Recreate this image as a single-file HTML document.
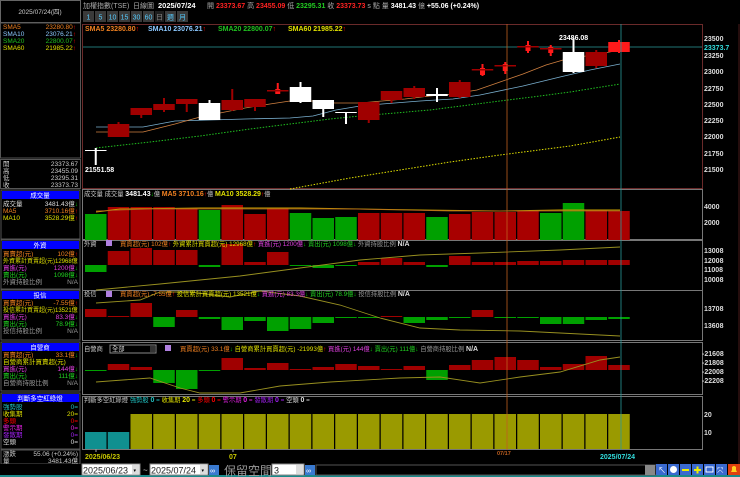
<!DOCTYPE html>
<html><head><meta charset="utf-8">
<style>
html,body{margin:0;padding:0;background:#000;width:740px;height:477px;overflow:hidden}
svg{display:block;font-size:7px}
text{font-family:"Liberation Sans","Noto Sans CJK TC",sans-serif}
.b{font-weight:bold}
</style></head><body>
<svg id="s" width="740" height="477" viewBox="0 0 740 477" xmlns="http://www.w3.org/2000/svg">
<rect width="740" height="477" fill="#000"/>
<rect x="0.5" y="0.5" width="80" height="22" fill="#000" stroke="#666"/>
<text x="40" y="14" fill="#ccc" text-anchor="middle" font-size="6.5">2025/07/24(四)</text>
<rect x="0.5" y="23" width="80" height="135" fill="#000" stroke="#555"/>
<g font-size="6.5">
<text x="3" y="29" fill="#f08020">SMA5</text><text x="76" y="29" fill="#f08020" text-anchor="end">23280.80<tspan fill="#f00">↑</tspan></text>
<text x="3" y="36" fill="#8cc8ff">SMA10</text><text x="76" y="36" fill="#8cc8ff" text-anchor="end">23076.21<tspan fill="#f00">↑</tspan></text>
<text x="3" y="43" fill="#20c020">SMA20</text><text x="76" y="43" fill="#20c020" text-anchor="end">22800.07<tspan fill="#f00">↑</tspan></text>
<text x="3" y="50" fill="#e0e000">SMA60</text><text x="76" y="50" fill="#e0e000" text-anchor="end">21985.22<tspan fill="#f00">↑</tspan></text>
</g>
<rect x="0.5" y="159.5" width="80" height="29" fill="#000" stroke="#555"/>
<g font-size="6.5" fill="#ccc">
<text x="3" y="166">開</text><text x="78" y="166" text-anchor="end">23373.67</text>
<text x="3" y="173">高</text><text x="78" y="173" text-anchor="end">23455.09</text>
<text x="3" y="180">低</text><text x="78" y="180" text-anchor="end">23295.31</text>
<text x="3" y="187">收</text><text x="78" y="187" text-anchor="end">23373.73</text>
</g>
<g font-size="6.5">
<rect x="1" y="190" width="79" height="49" fill="#000" stroke="#555"/>
<rect x="2" y="191" width="77" height="8" fill="#0000ff"/><text x="40" y="197.5" fill="#fff" text-anchor="middle">成交量</text>
<text x="3" y="206" fill="#ddd">成交量</text><text x="78" y="206" fill="#ddd" text-anchor="end">3481.43億<tspan fill="#0c0">↓</tspan></text>
<text x="3" y="213" fill="#f08020">MA5</text><text x="78" y="213" fill="#f08020" text-anchor="end">3710.16億<tspan fill="#f00">↑</tspan></text>
<text x="3" y="220" fill="#e0e000">MA10</text><text x="78" y="220" fill="#e0e000" text-anchor="end">3528.29億<tspan fill="#f00">↑</tspan></text>

<rect x="1" y="240" width="79" height="49" fill="#000" stroke="#555"/>
<rect x="2" y="241" width="77" height="8" fill="#0000ff"/><text x="40" y="247.5" fill="#fff" text-anchor="middle">外資</text>
<text x="3" y="256" fill="#f08020">買賣超(元)</text><text x="78" y="256" fill="#f08020" text-anchor="end">102億<tspan fill="#f00">↑</tspan></text>
<text x="3" y="263" fill="#e0e000" font-size="6">外資累計買賣超(元)12968億</text>
<text x="3" y="270" fill="#e040e0">買進(元)</text><text x="78" y="270" fill="#e040e0" text-anchor="end">1200億<tspan fill="#0c0">↓</tspan></text>
<text x="3" y="277" fill="#20d020">賣出(元)</text><text x="78" y="277" fill="#20d020" text-anchor="end">1098億<tspan fill="#0c0">↓</tspan></text>
<text x="3" y="284" fill="#999">外資持股比例</text><text x="78" y="284" fill="#999" text-anchor="end">N/A</text>

<rect x="1" y="290" width="79" height="50" fill="#000" stroke="#555"/>
<rect x="2" y="291" width="77" height="8" fill="#0000ff"/><text x="40" y="297.5" fill="#fff" text-anchor="middle">投信</text>
<text x="3" y="305" fill="#f08020">買賣超(元)</text><text x="78" y="305" fill="#f08020" text-anchor="end">-7.55億<tspan fill="#f00">↑</tspan></text>
<text x="3" y="312" fill="#e0e000" font-size="6">投信累計買賣超(元)13521億</text>
<text x="3" y="319" fill="#e040e0">買進(元)</text><text x="78" y="319" fill="#e040e0" text-anchor="end">83.3億<tspan fill="#0c0">↓</tspan></text>
<text x="3" y="326" fill="#20d020">賣出(元)</text><text x="78" y="326" fill="#20d020" text-anchor="end">78.9億<tspan fill="#0c0">↓</tspan></text>
<text x="3" y="333" fill="#999">投信持股比例</text><text x="78" y="333" fill="#999" text-anchor="end">N/A</text>

<rect x="1" y="342" width="79" height="49" fill="#000" stroke="#555"/>
<rect x="2" y="343" width="77" height="8" fill="#0000ff"/><text x="40" y="349.5" fill="#fff" text-anchor="middle">自營商</text>
<text x="3" y="357" fill="#f08020">買賣超(元)</text><text x="78" y="357" fill="#f08020" text-anchor="end">33.1億<tspan fill="#0c0">↓</tspan></text>
<text x="3" y="364" fill="#e0e000">自營商累計買賣超(元)</text>
<text x="3" y="371" fill="#e040e0">買進(元)</text><text x="78" y="371" fill="#e040e0" text-anchor="end">144億<tspan fill="#0c0">↓</tspan></text>
<text x="3" y="378" fill="#20d020">賣出(元)</text><text x="78" y="378" fill="#20d020" text-anchor="end">111億<tspan fill="#0c0">↓</tspan></text>
<text x="3" y="385" fill="#999">自營商持股比例</text><text x="78" y="385" fill="#999" text-anchor="end">N/A</text>

<rect x="1" y="393" width="79" height="56" fill="#000" stroke="#555"/>
<rect x="2" y="394" width="77" height="8" fill="#0000ff"/><text x="40" y="400.5" fill="#fff" text-anchor="middle">判斷多空紅綠燈</text>
<text x="3" y="409" fill="#20c0c0">強勢股</text><text x="78" y="409" fill="#20c0c0" text-anchor="end">0=</text>
<text x="3" y="416" fill="#e0e000">收集期</text><text x="78" y="416" fill="#e0e000" text-anchor="end">20=</text>
<text x="3" y="423" fill="#f00">多頭</text><text x="78" y="423" fill="#f00" text-anchor="end">0=</text>
<text x="3" y="430" fill="#e020e0">警示期</text><text x="78" y="430" fill="#e020e0" text-anchor="end">0=</text>
<text x="3" y="437" fill="#a020f0">發散期</text><text x="78" y="437" fill="#a020f0" text-anchor="end">0=</text>
<text x="3" y="444" fill="#ddd">空頭</text><text x="78" y="444" fill="#ddd" text-anchor="end">0=</text>

<rect x="1" y="450" width="79" height="14" fill="#000" stroke="#555"/>
<text x="3" y="456" fill="#ccc">漲跌</text><text x="78" y="456" fill="#ccc" text-anchor="end">55.06 (+0.24%)</text>
<text x="3" y="463" fill="#ccc">量</text><text x="78" y="463" fill="#ccc" text-anchor="end">3481.43億</text>
</g>

<g font-size="7">
<text x="83" y="8" fill="#aaa">加權指數(TSE)</text>
<text x="133" y="8" fill="#aaa">日線圖</text>
<text x="158" y="8" fill="#fff" class="b" font-size="7.5">2025/07/24</text>
<text x="207" y="8" fill="#aaa">開 <tspan fill="#f22" class="b">23373.67</tspan>  高 <tspan fill="#f22" class="b">23455.09</tspan>  低 <tspan fill="#2c2" class="b">23295.31</tspan>  收 <tspan fill="#f22" class="b">23373.73</tspan> s 點  量 <tspan fill="#fff" class="b">3481.43</tspan> 億  <tspan fill="#fff" class="b">+55.06 (+0.24%)</tspan></text>
</g>
<g font-size="7" text-anchor="middle">
<rect x="83" y="11" width="11" height="11" fill="#3a3a3a"/><text x="88.5" y="19.5" fill="#5cf">1</text>
<rect x="95" y="11" width="11" height="11" fill="#3a3a3a"/><text x="100.5" y="19.5" fill="#5cf">5</text>
<rect x="107" y="11" width="11" height="11" fill="#3a3a3a"/><text x="112.5" y="19.5" fill="#5cf">10</text>
<rect x="119" y="11" width="11" height="11" fill="#3a3a3a"/><text x="124.5" y="19.5" fill="#5cf">15</text>
<rect x="131" y="11" width="11" height="11" fill="#3a3a3a"/><text x="136.5" y="19.5" fill="#5cf">30</text>
<rect x="143" y="11" width="11" height="11" fill="#3a3a3a"/><text x="148.5" y="19.5" fill="#5cf">60</text>
<rect x="155" y="11" width="9" height="11" fill="#1e1e1e"/><text x="159.5" y="19.5" fill="#888">日</text>
<rect x="165" y="11" width="11" height="11" fill="#3a3a3a"/><text x="170.5" y="19.5" fill="#5cf">週</text>
<rect x="177" y="11" width="11" height="11" fill="#3a3a3a"/><text x="182.5" y="19.5" fill="#5cf">月</text>
</g>

<g fill="none" stroke="#777" stroke-width="1">
<rect x="82.5" y="24.5" width="620" height="164" stroke="#6a2a2a"/>
<rect x="82.5" y="189.5" width="620" height="50"/>
<rect x="82.5" y="240.5" width="620" height="50"/>
<rect x="82.5" y="290.5" width="620" height="50"/>
<rect x="82.5" y="342.5" width="620" height="52"/>
<rect x="82.5" y="396.5" width="620" height="53"/>
</g>
<line x1="739" y1="24" x2="739" y2="464" stroke="#4a1a1a"/>
<line x1="83" y1="47" x2="702" y2="47" stroke="#2a9a9a" stroke-width="0.8"/>
<g font-size="7" class="b">
<text x="85" y="31" fill="#f08020">SMA5 23280.80<tspan fill="#f00">↑</tspan></text>
<text x="148" y="31" fill="#8cc8ff">SMA10 23076.21<tspan fill="#f00">↑</tspan></text>
<text x="218" y="31" fill="#20c020">SMA20 22800.07<tspan fill="#f00">↑</tspan></text>
<text x="288" y="31" fill="#e0e000">SMA60 21985.22<tspan fill="#f00">↑</tspan></text>
</g>
<polyline fill="none" stroke="#e0e000" stroke-width="1" stroke-dasharray="1.5,1.5" points="290,189 350,178 400,170 450,162 500,155 570,146 620,137"/>
<polyline fill="none" stroke="#20c020" stroke-width="1" stroke-dasharray="1.5,1.5" points="96,148 150,142 200,136 250,129 290,124 330,119 360,116 430,110 500,101 540,96 570,92 620,84"/>
<polyline fill="none" stroke="#7ab0d0" stroke-width="0.8" points="96,127 143,127 175,121 245,119 290,118 313,116 336,110 360,106 382,104 420,101 453,99 480,95 523,86 560,77 590,70 620,64"/>
<polyline fill="none" stroke="#d08040" stroke-width="0.8" points="96,132 143,132 175,124 200,117 245,108 270,104 290,101 313,101 335,103 360,103 382,101 405,99 430,96 453,94 477,90 500,82 523,74 546,65 570,58 594,55 620,50"/>
<g id="cand"></g>
<text x="85" y="172" fill="#fff" class="b" font-size="7">21551.58</text>
<text x="559" y="40" fill="#fff" class="b" font-size="7">23486.08</text>

<g font-size="7" fill="#ddd" class="b">
<text x="704" y="41">23500</text>
<text x="704" y="50" fill="#3dd">23373.7</text>
<text x="704" y="58">23250</text>
<text x="704" y="74">23000</text>
<text x="704" y="91">22750</text>
<text x="704" y="107">22500</text>
<text x="704" y="123">22250</text>
<text x="704" y="139">22000</text>
<text x="704" y="156">21750</text>
<text x="704" y="172">21500</text>
<text x="704" y="209">4000</text>
<text x="704" y="225">2000</text>
<text x="704" y="253">13008</text>
<text x="704" y="263">12008</text>
<text x="704" y="272">11008</text>
<text x="704" y="282">10008</text>
<text x="704" y="311">13708</text>
<text x="704" y="328">13608</text>
<text x="702" y="356">-21608</text>
<text x="702" y="365">-21808</text>
<text x="702" y="374">-22008</text>
<text x="702" y="383">-22208</text>
<text x="704" y="417">20</text>
<text x="704" y="435">10</text>
</g>

<g id="bars"></g>

<g font-size="6.3">
<text x="84" y="196" fill="#ccc">成交量  成交量 <tspan fill="#fff" class="b" font-size="7">3481.43</tspan><tspan fill="#0c0">↓</tspan>億    <tspan fill="#f08020" class="b" font-size="7">MA5 3710.16</tspan><tspan fill="#f00">↑</tspan>億    <tspan fill="#e0e000" class="b" font-size="7">MA10 3528.29</tspan><tspan fill="#f00">↑</tspan>億</text>
<text x="84" y="246" fill="#ccc">外資</text><rect x="106" y="240" width="6" height="6" fill="#b080e0"/>
<text x="120" y="246" fill="#f08020">買賣超(元) 102億<tspan fill="#f00">↑</tspan>   <tspan fill="#e0e000">外資累計買賣超(元) 12968億</tspan><tspan fill="#f00">↑</tspan>   <tspan fill="#e040e0">買進(元) 1200億</tspan><tspan fill="#0c0">↓</tspan>   <tspan fill="#20d020">賣出(元) 1098億</tspan><tspan fill="#0c0">↓</tspan>   <tspan fill="#999">外資持股比例 <tspan fill="#ddd" class="b" font-size="7">N/A</tspan></tspan></text>
<text x="84" y="296" fill="#ccc">投信</text><rect x="106" y="291" width="6" height="6" fill="#b080e0"/>
<text x="120" y="296" fill="#f08020">買賣超(元) -7.55億<tspan fill="#f00">↑</tspan>   <tspan fill="#e0e000">投信累計買賣超(元) 13521億</tspan><tspan fill="#0c0">↓</tspan>   <tspan fill="#e040e0">買進(元) 83.3億</tspan><tspan fill="#0c0">↓</tspan>   <tspan fill="#20d020">賣出(元) 78.9億</tspan><tspan fill="#0c0">↓</tspan>   <tspan fill="#999">投信持股比例 <tspan fill="#ddd" class="b" font-size="7">N/A</tspan></tspan></text>
<text x="84" y="351" fill="#ccc">自營商</text>
<rect x="110" y="345" width="46" height="8" fill="#000" stroke="#888"/><text x="112" y="351" fill="#ddd">全部</text><rect x="150" y="346" width="5" height="6" fill="#333"/>
<rect x="165" y="345" width="6" height="6" fill="#b080e0"/>
<text x="180" y="351" fill="#f08020">買賣超(元) 33.1億<tspan fill="#0c0">↓</tspan>   <tspan fill="#e0e000">自營商累計買賣超(元) -21993億</tspan><tspan fill="#f00">↑</tspan>   <tspan fill="#e040e0">買進(元) 144億</tspan><tspan fill="#0c0">↓</tspan>   <tspan fill="#20d020">賣出(元) 111億</tspan><tspan fill="#0c0">↓</tspan>   <tspan fill="#999">自營商持股比例 <tspan fill="#ddd" class="b" font-size="7">N/A</tspan></tspan></text>
<text x="84" y="402" fill="#ccc">判斷多空紅綠燈    <tspan fill="#20c0c0">強勢股 <tspan class="b" font-size="7">0</tspan> =</tspan>   <tspan fill="#e0e000">收集期 <tspan class="b" font-size="7">20</tspan> =</tspan>   <tspan fill="#f00">多頭 <tspan class="b" font-size="7">0</tspan> =</tspan>   <tspan fill="#e020e0">警示期 <tspan class="b" font-size="7">0</tspan> =</tspan>   <tspan fill="#a020f0">發散期 <tspan class="b" font-size="7">0</tspan> =</tspan>   <tspan fill="#ddd">空頭 <tspan class="b" font-size="7">0</tspan> =</tspan></text>
</g>

<line x1="507" y1="24" x2="507" y2="450" stroke="#c06020" stroke-width="0.8"/>
<line x1="621" y1="24" x2="621" y2="450" stroke="#2a9a9a" stroke-width="0.8"/>

<g font-size="7" class="b">
<line x1="96" y1="449" x2="96" y2="452" stroke="#aaa"/>
<text x="85" y="459" fill="#c8c800">2025/06/23</text>
<line x1="233" y1="449" x2="233" y2="452" stroke="#aaa"/>
<text x="229" y="459" fill="#c8c800">07</text>
<text x="497" y="455" fill="#c06020" font-size="5.5">07/17</text>
<text x="600" y="459" fill="#3dd">2025/07/24</text>
</g>

<rect x="0" y="464" width="740" height="13" fill="#000"/>
<rect x="0" y="475" width="740" height="2" fill="#1a8a8a"/>
<rect x="82" y="464" width="58" height="11" fill="#fff" stroke="#888"/>
<text x="83" y="473.5" fill="#222" font-size="9">2025/06/23</text>
<rect x="132" y="465" width="7" height="9" fill="#ddd"/><text x="133.5" y="472" font-size="5" fill="#000">▾</text>
<text x="143" y="473" fill="#ccc" font-size="8">~</text>
<rect x="150" y="464" width="58" height="11" fill="#fff" stroke="#888"/>
<text x="151" y="473.5" fill="#222" font-size="9">2025/07/24</text>
<rect x="200" y="465" width="7" height="9" fill="#ddd"/><text x="201.5" y="472" font-size="5" fill="#000">▾</text>
<rect x="209" y="465" width="10" height="10" fill="#3a7ad0"/><text x="210" y="473" font-size="7" fill="#fff">∞</text>
<text x="224" y="475" fill="#999" font-size="12">保留空間</text>
<rect x="272" y="464" width="32" height="11" fill="#fff" stroke="#888"/>
<text x="274" y="473.5" fill="#222" font-size="9">3</text>
<rect x="296" y="465" width="7" height="9" fill="#ddd"/>
<rect x="305" y="465" width="10" height="10" fill="#3a7ad0"/><text x="306" y="473" font-size="7" fill="#fff">∞</text>
<rect x="316" y="465" width="340" height="10" fill="#000" stroke="#555"/>
<rect x="645" y="465" width="10" height="10" fill="#888"/>
<g>
<rect x="656" y="464" width="11" height="11" fill="#3a6ad0"/><text x="658" y="473" font-size="8" fill="#fff">↖</text>
<rect x="668" y="464" width="11" height="11" fill="#3a6ad0"/><circle cx="673.5" cy="469.5" r="3.5" fill="#fff"/>
<rect x="680" y="464" width="11" height="11" fill="#3a6ad0"/><rect x="682" y="469" width="7" height="2" fill="#ee0"/>
<rect x="692" y="464" width="11" height="11" fill="#3a6ad0"/><rect x="694" y="469" width="7" height="2" fill="#ee0"/><rect x="696.5" y="466.5" width="2" height="7" fill="#ee0"/>
<rect x="704" y="464" width="11" height="11" fill="#3a6ad0"/><rect x="706" y="467" width="7" height="5" fill="none" stroke="#fff"/>
<rect x="716" y="464" width="11" height="11" fill="#3a6ad0"/><text x="717" y="473" font-size="8" fill="#fff">⤧</text>
<rect x="728" y="464" width="12" height="11" fill="#e04010"/><path d="M731 472 L737 472 L736 470 L736 467 Q734 465 732 467 L732 470 Z" fill="#ffd020"/>
</g>
</svg>
<script>
(function(){
var NS="http://www.w3.org/2000/svg";
function R(g,x,y,w,h,f){var r=document.createElementNS(NS,"rect");r.setAttribute("x",x);r.setAttribute("y",y);r.setAttribute("width",w);r.setAttribute("height",Math.max(h,1));r.setAttribute("fill",f);g.appendChild(r);}
function L(g,pts,c,w){var p=document.createElementNS(NS,"polyline");p.setAttribute("points",pts);p.setAttribute("fill","none");p.setAttribute("stroke",c);p.setAttribute("stroke-width",w||0.9);g.appendChild(p);}
var P=22.75,X0=85,W=21.5;
function cx(i){return X0+P*i;}
var cg=document.getElementById("cand");
var C=[["w",150,151,148,165],["d",124,137,122,137],["d",108,115,108,118],["d",104,110,98,112],["d",99,104,99,112],["w",103,120,100,120],["d",100,110,89,111],["d",99,107,99,111],["r",90,91,83,91],["w",87,102,82,103],["w",100,109,100,117],["w",112,113,112,124],["d",102,120,102,123],["d",91,100,91,103],["d",88,97,86,99],["w",94,96,88,102],["d",82,97,80,98],["r",69,72,64,76],["r",65,68,62,74],["r",46,48,41,53],["r",48,50,45,56],["w",52,72,38,73],["d",52,66,50,68],["r",42,52,40,53]];
C.forEach(function(c,i){var x=cx(i),col=c[0]=="w"?"#fff":(c[0]=="d"?"#a00000":"#ff1a1a");
R(cg,x+W/2-1,c[3],2,c[4]-c[3],col);
if(c[0]=="r"&&c[2]-c[1]<4){R(cg,x+W/2-2.5,c[1]-1,5,c[2]-c[1]+4,col);R(cg,x,c[1],W,1.5,"#a00000");}
else R(cg,x,c[1],W,c[2]-c[1],col);});
var bg=document.getElementById("bars");
var V=[[214,"g"],[207,"r"],[207,"r"],[207,"r"],[208,"r"],[210,"g"],[205,"r"],[214,"r"],[208,"r"],[213,"g"],[218,"g"],[217,"g"],[213,"r"],[213,"r"],[213,"r"],[217,"g"],[214,"r"],[212,"r"],[212,"r"],[211,"r"],[213,"g"],[203,"g"],[210,"r"],[211,"r"]];
V.forEach(function(v,i){R(bg,cx(i),v[0],W,240-v[0],v[1]=="g"?"#00a000":"#a80000");});
L(bg,"96,212 120,209 200,208 300,208 420,210 500,211 560,210 620,210","#c8a000");
L(bg,"96,211 150,209 250,209 350,209 450,211 540,211 620,211","#b06020",0.7);
function D(arr,z){arr.forEach(function(v,i){if(v<z)R(bg,cx(i),v,W,z-v,"#a00000");else R(bg,cx(i),z,W,v-z,"#00a000");});}
D([272,251,248,250,250,267,244,262,252,266,268,266,262,258,262,267,256,262,262,261,261,260,260,260],265);
L(bg,"96,290 160,284 240,276 300,268 360,260 420,255 480,253 560,250 620,247","#989020");
D([309,316,303,327,310,319,330,321,331,329,323,318,318,316,323,320,318,310,318,318,324,324,320,319],317);
L(bg,"96,303 140,300 160,292 190,292 230,297 260,291 300,296 340,305 380,318 420,328 460,330 520,331 580,334 620,336","#989020");
D([371,364,367,383,389,371,358,368,363,369,367,364,366,369,366,380,365,360,357,360,367,364,356,365],370);
L(bg,"96,382 150,378 180,388 200,393 240,393 280,386 330,382 400,378 440,377 480,383 520,377 560,372 600,360 620,357","#989020");
for(var i=0;i<24;i++){var t=i<2?432:414;R(bg,cx(i),t,W,449-t,i<2?"#109090":"#9a9a00");}
})();
</script>
</body></html>
